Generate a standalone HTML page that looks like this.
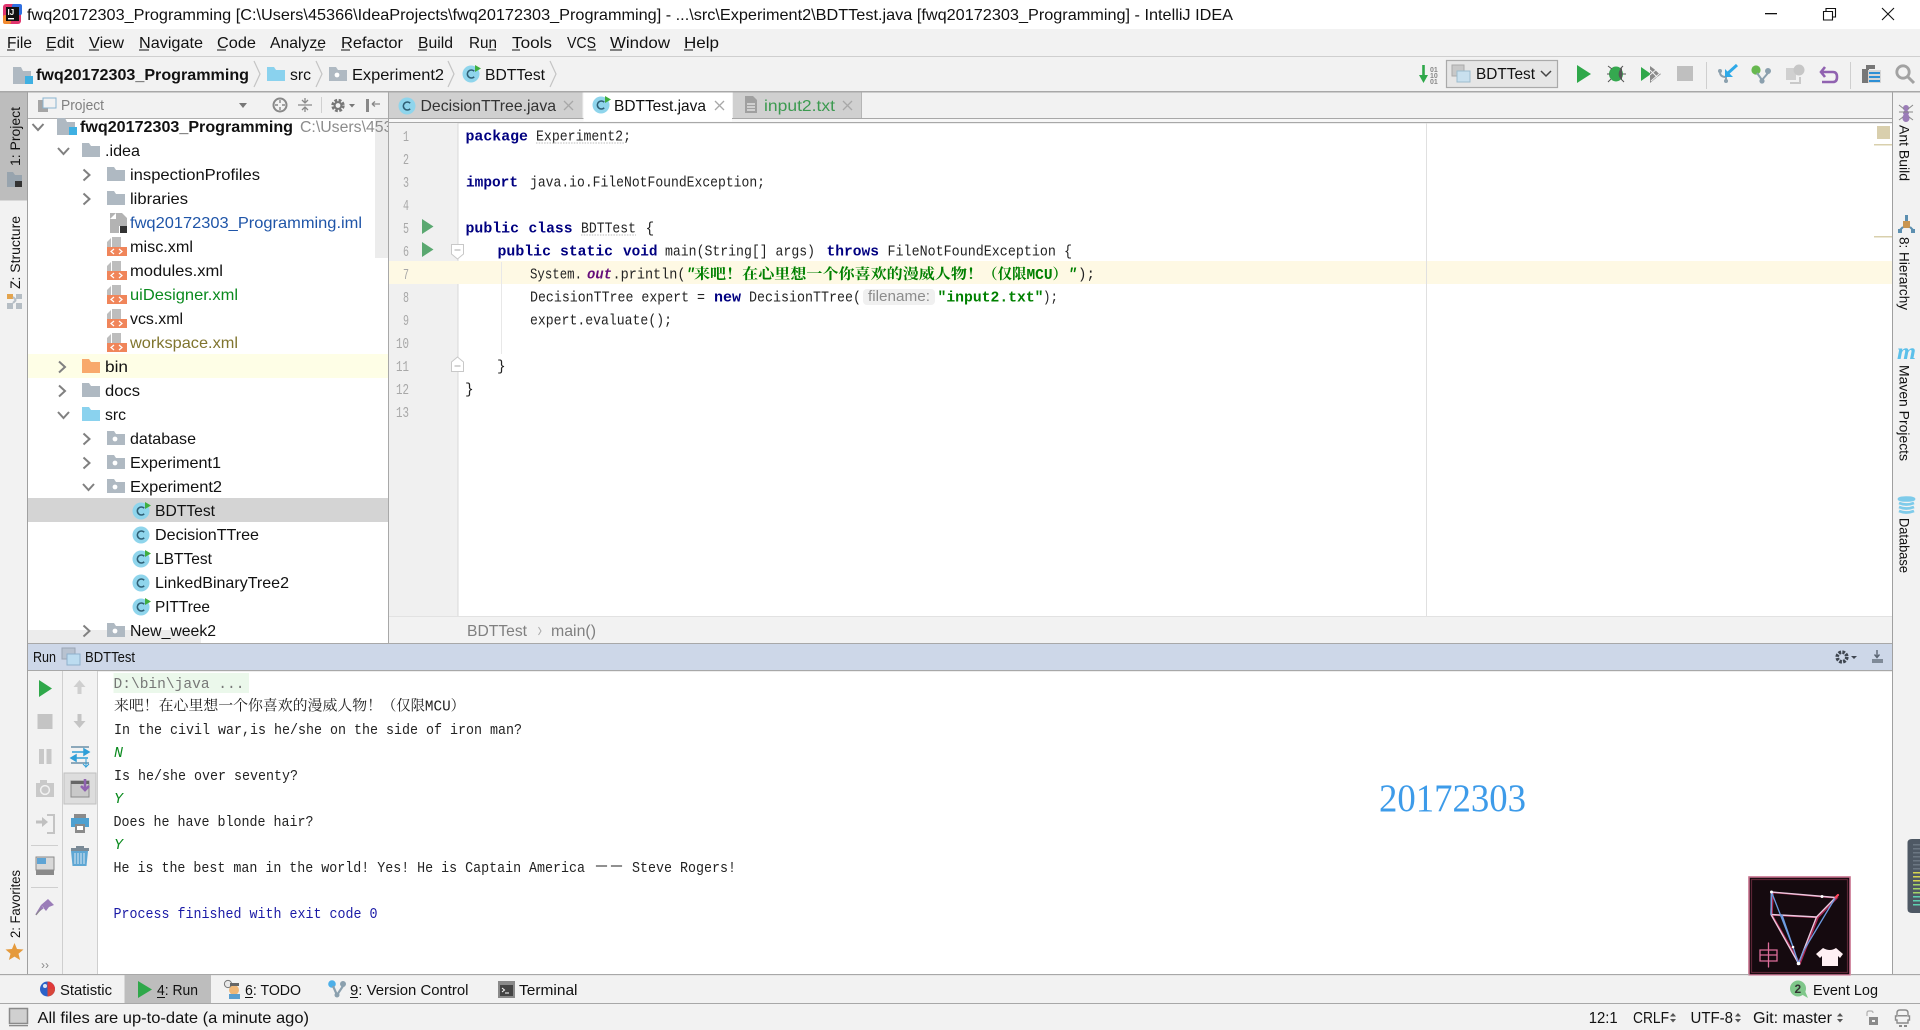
<!DOCTYPE html>
<html><head><meta charset="utf-8"><title>IntelliJ IDEA</title>
<style>
html,body{margin:0;padding:0;background:#fff;width:1920px;height:1030px;overflow:hidden}
svg{display:block}
text{font-family:"Liberation Sans","Noto Sans CJK SC",sans-serif;font-size:16px;fill:#111;white-space:pre}
.m{font-family:"Liberation Mono","Noto Serif CJK SC",monospace;font-size:14.5px;fill:#222}
.b{font-weight:bold;fill:#000080}
.g{font-weight:bold;fill:#008000}
.c{font-family:"Liberation Mono","Noto Serif CJK SC",monospace;font-size:14.5px;fill:#222}
.n{font-family:"Liberation Mono",monospace;font-size:15px;fill:#a8a8a8}
.r{font-size:13.5px;fill:#111}
</style></head><body>
<svg width="1920" height="1030" viewBox="0 0 1920 1030" xmlns="http://www.w3.org/2000/svg">
<defs>
<symbol id="fd" viewBox="0 0 18 14" width="18" height="14"><path d="M0 0H7L9 3H18V14H0Z" fill="#afb9c2"/></symbol>
<symbol id="fs" viewBox="0 0 18 14" width="18" height="14"><path d="M0 0H7L9 3H18V14H0Z" fill="#8ad2ee"/></symbol>
<symbol id="fo" viewBox="0 0 18 14" width="18" height="14"><path d="M0 0H7L9 3H18V14H0Z" fill="#f8a96c"/></symbol>
<symbol id="fp" viewBox="0 0 18 14" width="18" height="14"><path d="M0 0H7L9 3H18V14H0Z" fill="#afb9c2"/><circle cx="8" cy="8" r="2.4" fill="#fff"/></symbol>
<symbol id="mod" viewBox="0 0 20 17" width="20" height="17"><path d="M0 0H8L10 4H18V17H0Z" fill="#afb9c2"/><rect x="12" y="9" width="8" height="8" fill="#3fb0e2"/></symbol>
<symbol id="cl" viewBox="0 0 19 18" width="19" height="18"><circle cx="9" cy="9" r="8.5" fill="#8fd5ec"/><path d="M12.2 6.2A4 4 0 1 0 12.2 11.8" fill="none" stroke="#2f5f75" stroke-width="1.6"/></symbol>
<symbol id="clr" viewBox="0 0 19 18" width="19" height="18"><circle cx="9" cy="9" r="8.5" fill="#8fd5ec"/><path d="M12.2 6.2A4 4 0 1 0 12.2 11.8" fill="none" stroke="#2f5f75" stroke-width="1.6"/><path d="M13 0L19 3.5L13 7Z" fill="#3fae3f"/></symbol>
<symbol id="xml" viewBox="0 0 20 19" width="20" height="19"><path d="M5 0H14V10H5Z" fill="#bdbdbd"/><path d="M4 1V10H0V5Z" fill="#bdbdbd"/><rect y="10" width="20" height="9" fill="#f0855a"/><path d="M7 12L4 14.5L7 17M12 12L15 14.5L12 17" fill="none" stroke="#fff" stroke-width="1.2"/></symbol>
<symbol id="play" viewBox="0 0 14 18" width="14" height="18"><path d="M0 0L14 9L0 18Z" fill="#2fa84a"/></symbol>
</defs>

<rect width="1920" height="1030" fill="#fff"/>

<!-- title -->
<rect width="1920" height="29" fill="#fff"/>
<rect x="3" y="4" width="18" height="20" rx="3" fill="#e0356e"/>
<rect x="12" y="4" width="10" height="11" rx="2" fill="#2f6fe0"/>
<rect x="3" y="15" width="8" height="9" rx="2" fill="#f28b30"/>
<rect x="6" y="7" width="13" height="14" fill="#111"/>
<rect x="8" y="18" width="6" height="1.4" fill="#fff"/>
<text x="7.5" y="15" style="font-size:8px;font-weight:bold;fill:#fff">IJ</text>
<text x="27" y="20" textLength="1206" lengthAdjust="spacingAndGlyphs">fwq20172303_Programming [C:\Users\45366\IdeaProjects\fwq20172303_Programming] - ...\src\Experiment2\BDTTest.java [fwq20172303_Programming] - IntelliJ IDEA</text>
<rect x="1765" y="13" width="12" height="1.3" fill="#111"/>
<path d="M1823.5 11.5h9v8.5h-9zM1826 11.5V8.5h9.5v8.5h-3" fill="none" stroke="#111" stroke-width="1.1"/>
<path d="M1882 8L1894 20M1894 8L1882 20" stroke="#111" stroke-width="1.1"/>

<!-- menu -->
<rect y="29" width="1920" height="27" fill="#f2f2f2"/>
<rect y="56" width="1920" height="1" fill="#cfcfcf"/>
<text x="7" y="48" textLength="25" lengthAdjust="spacingAndGlyphs">File</text>
<text x="46" y="48" textLength="28" lengthAdjust="spacingAndGlyphs">Edit</text>
<text x="89" y="48" textLength="35" lengthAdjust="spacingAndGlyphs">View</text>
<text x="139" y="48" textLength="64" lengthAdjust="spacingAndGlyphs">Navigate</text>
<text x="217" y="48" textLength="39" lengthAdjust="spacingAndGlyphs">Code</text>
<text x="270" y="48" textLength="56" lengthAdjust="spacingAndGlyphs">Analyze</text>
<text x="341" y="48" textLength="62" lengthAdjust="spacingAndGlyphs">Refactor</text>
<text x="418" y="48" textLength="35" lengthAdjust="spacingAndGlyphs">Build</text>
<text x="469" y="48" textLength="28" lengthAdjust="spacingAndGlyphs">Run</text>
<text x="512" y="48" textLength="40" lengthAdjust="spacingAndGlyphs">Tools</text>
<text x="567" y="48" textLength="29" lengthAdjust="spacingAndGlyphs">VCS</text>
<text x="610" y="48" textLength="60" lengthAdjust="spacingAndGlyphs">Window</text>
<text x="684" y="48" textLength="35" lengthAdjust="spacingAndGlyphs">Help</text>
<g fill="#111"><rect x="7" y="49.5" width="8" height="1"/><rect x="46" y="49.5" width="8" height="1"/><rect x="89" y="49.5" width="10" height="1"/><rect x="139" y="49.5" width="10" height="1"/><rect x="217" y="49.5" width="9" height="1"/><rect x="315" y="49.5" width="8" height="1"/><rect x="341" y="49.5" width="9" height="1"/><rect x="418" y="49.5" width="9" height="1"/><rect x="488" y="49.5" width="8" height="1"/><rect x="512" y="49.5" width="8" height="1"/><rect x="588" y="49.5" width="8" height="1"/><rect x="610" y="49.5" width="12" height="1"/><rect x="684" y="49.5" width="9" height="1"/></g>

<!-- nav bar -->
<rect y="57" width="1920" height="34" fill="#f2f2f2"/>
<rect y="91" width="1920" height="1.5" fill="#a8a8a8"/>
<use href="#mod" x="13" y="67"/>
<text x="36" y="80" textLength="213" lengthAdjust="spacingAndGlyphs" style="font-weight:bold">fwq20172303_Programming</text>
<g fill="none" stroke="#c4c4c4" stroke-width="1.2"><path d="M254 61L260 74L254 87"/><path d="M316 61L322 74L316 87"/><path d="M448 61L454 74L448 87"/><path d="M550 61L556 74L550 87"/></g>
<use href="#fs" x="267" y="67"/>
<text x="290" y="80" textLength="21" lengthAdjust="spacingAndGlyphs">src</text>
<use href="#fp" x="329" y="67"/>
<text x="352" y="80" textLength="92" lengthAdjust="spacingAndGlyphs">Experiment2</text>
<use href="#clr" x="462" y="65"/>
<text x="485" y="80" textLength="60" lengthAdjust="spacingAndGlyphs">BDTTest</text>

<!-- toolbar right -->
<path d="M1423.5 65v13" stroke="#2fa84a" stroke-width="2.6"/><path d="M1419 75h9l-4.5 8z" fill="#2fa84a"/>
<text x="1430" y="72" style="font-size:7px;font-weight:bold;fill:#888">01</text><text x="1430" y="78" style="font-size:7px;font-weight:bold;fill:#888">10</text><text x="1430" y="84" style="font-size:7px;font-weight:bold;fill:#888">01</text>
<rect x="1446.5" y="60.5" width="111" height="27" fill="#e6e6e6" stroke="#aaa" stroke-width="1.2"/>
<rect x="1452" y="65" width="12" height="11" fill="#c8c8c8" stroke="#aaa"/><rect x="1457" y="71" width="13" height="11" fill="#c9e0ee" stroke="#9dbccd"/>
<text x="1476" y="79" textLength="59" lengthAdjust="spacingAndGlyphs">BDTTest</text>
<path d="M1541 71L1546 76L1551 71" fill="none" stroke="#444" stroke-width="1.5"/>
<use href="#play" x="1577" y="65"/>
<ellipse cx="1616" cy="74" rx="7" ry="7.5" fill="#35a84f"/><path d="M1622 68a7 7 0 0 0 0 12z" fill="#555"/><path d="M1608 66l4 3M1623 66l-3 3M1607 74h3M1622 74h4M1608 82l3-3M1624 82l-3-3" stroke="#555"/>
<path d="M1641 67L1651 74L1641 81Z" fill="#2fa84a"/><path d="M1650 66L1661 74L1650 83Z" fill="#8a8a8a"/><path d="M1650 70l8 8M1653 67l7 7M1650 75l8-7M1651 81l8-7" stroke="#f2f2f2" stroke-width="1"/>
<rect x="1677" y="66" width="16" height="15" fill="#bfbfbf"/>
<rect x="1706" y="62" width="1" height="27" fill="#cfcfcf"/>
<path d="M1726 71L1726 82M1720 72q0 5 6 5" stroke="#8ba0ae" stroke-width="2" fill="none"/><circle cx="1720" cy="71" r="2" fill="#8ba0ae"/><circle cx="1726" cy="81" r="2" fill="#8ba0ae"/><path d="M1737 65l-10 9" stroke="#2ea9e8" stroke-width="3"/><path d="M1725 69v8h8z" fill="#2ea9e8"/>
<circle cx="1756" cy="70" r="4.6" fill="#67b84f"/><circle cx="1768" cy="71" r="3" fill="#8ba0ae"/><circle cx="1762" cy="81" r="2.6" fill="#8ba0ae"/><path d="M1757 73L1762 80L1768 73" fill="none" stroke="#8ba0ae" stroke-width="2"/>
<rect x="1786" y="68" width="10" height="12" fill="#d0d0d0"/><path d="M1790 83h10v-6" fill="none" stroke="#c9c9c9" stroke-width="2"/><circle cx="1799" cy="70" r="5.5" fill="#c6c6c6"/>
<path d="M1825 67L1821 72L1825 77M1822 72H1833Q1837 72 1837 77T1833 82H1822" fill="none" stroke="#9062b0" stroke-width="2.6"/>
<rect x="1850" y="62" width="1" height="27" fill="#cfcfcf"/>
<rect x="1862" y="69" width="7" height="14" fill="#777"/><rect x="1866" y="65" width="9" height="4" fill="#777"/><rect x="1868" y="70" width="13" height="13" fill="#d5d5d5"/><path d="M1869 72h11v2h-11zM1869 76h11v2h-11zM1869 80h11v2h-11z" fill="#2d8fd5"/>
<circle cx="1903" cy="72" r="6.2" fill="none" stroke="#a2a2a2" stroke-width="2.8"/><path d="M1908 77L1914 83" stroke="#a2a2a2" stroke-width="3"/>

<!-- left strip -->
<rect y="92.5" width="27" height="882" fill="#f2f2f2"/>
<rect x="27" y="92.5" width="1" height="882" fill="#a0a0a0"/>
<rect y="92.5" width="27" height="108" fill="#bdbdbd"/>
<text class="r" transform="translate(20,166) rotate(-90)" textLength="59" lengthAdjust="spacingAndGlyphs">1: Project</text>
<path d="M7 172H13L15 175H22V187H7Z" fill="#98a4ae"/><rect x="15" y="181" width="7" height="6" fill="#333"/>
<text class="r" transform="translate(20,289) rotate(-90)" textLength="73" lengthAdjust="spacingAndGlyphs">Z: Structure</text>
<path d="M7 294h6v5H7zM16 294h6v5h-6zM7 303h6v6H7zM16 303h6v6h-6z" fill="#b5bdc4"/><rect x="7" y="294" width="6" height="5" fill="#e3a44e"/><path d="M13 297l3 3M16 300l-3 3" stroke="#b5bdc4" stroke-width="2"/>
<text class="r" transform="translate(20,938) rotate(-90)" textLength="68" lengthAdjust="spacingAndGlyphs">2: Favorites</text>
<path d="M14.5 943l2.5 6 6.5.5-5 4.2 1.6 6.3-5.6-3.4-5.6 3.4 1.6-6.3-5-4.2 6.5-.5z" fill="#e59a3c"/>

<!-- project panel -->
<rect x="28" y="92.5" width="360" height="25.5" fill="#f2f2f2"/>
<rect x="28" y="118" width="360" height="1" fill="#b0b0b0"/>
<rect x="38" y="100" width="10" height="12" fill="#a5a5a5"/><rect x="43" y="98" width="13" height="10" fill="#f2f2f2" stroke="#8ab4d0"/>
<text x="61" y="110" textLength="43" lengthAdjust="spacingAndGlyphs" style="fill:#808080;font-size:14.5px">Project</text>
<path d="M239 103h8l-4 5z" fill="#777"/>
<circle cx="280" cy="105" r="6.5" fill="none" stroke="#888" stroke-width="2"/><path d="M280 100v3M280 107v3M275 105h3M282 105h3" stroke="#888" stroke-width="1.4"/>
<path d="M298 105h14M305 98v4M302 100l3 3 3-3M305 112v-4M302 110l3-3 3 3" stroke="#888" fill="none" stroke-width="1.3"/>
<rect x="321" y="97" width="1" height="16" fill="#d0d0d0"/>
<circle cx="338" cy="105.5" r="5" fill="none" stroke="#777" stroke-width="3.4" stroke-dasharray="2.6 1.4"/><circle cx="338" cy="105.5" r="3.4" fill="none" stroke="#777" stroke-width="2"/><path d="M349 104h6l-3 3.5z" fill="#777"/>
<rect x="366" y="99" width="3" height="13" fill="#888"/><path d="M372 104h8M372 104l3-2.5M372 104l3 2.5" stroke="#888" stroke-width="1.3" fill="none"/>

<rect x="28" y="119" width="360" height="524" fill="#fff"/>
<rect x="375" y="119" width="13" height="139" fill="#ececec"/>
<rect x="28" y="354" width="360" height="24" fill="#fefee6"/>
<rect x="28" y="498" width="360" height="24" fill="#d4d4d4"/>
<rect x="28" y="630" width="173" height="13" fill="#ececec"/>

<g fill="none" stroke="#808080" stroke-width="2">
<path d="M32.5 124L38 130L43.5 124"/>
<path d="M58 148L63.5 154L69 148"/>
<path d="M83.5 169.5L89.5 175L83.5 180.5"/>
<path d="M83.5 193.5L89.5 199L83.5 204.5"/>
<path d="M59 361.5L65 367L59 372.5"/>
<path d="M59 385.5L65 391L59 396.5"/>
<path d="M58 412L63.5 418L69 412"/>
<path d="M83.5 433.5L89.5 439L83.5 444.5"/>
<path d="M83.5 457.5L89.5 463L83.5 468.5"/>
<path d="M83 484L88.5 490L94 484"/>
<path d="M83.5 625.5L89.5 631L83.5 636.5"/>
</g>

<use href="#mod" x="57" y="118"/>
<text x="80" y="132" textLength="213" lengthAdjust="spacingAndGlyphs" style="font-weight:bold">fwq20172303_Programming</text>
<svg x="300" y="110" width="88" height="30"><text x="0" y="22" textLength="110" lengthAdjust="spacingAndGlyphs" style="fill:#8c8c8c;font-size:15.5px">C:\Users\45366</text></svg>

<use href="#fd" x="82" y="143"/><text x="105" y="156" textLength="35" lengthAdjust="spacingAndGlyphs">.idea</text>
<use href="#fd" x="107" y="167"/><text x="130" y="180" textLength="130" lengthAdjust="spacingAndGlyphs">inspectionProfiles</text>
<use href="#fd" x="107" y="191"/><text x="130" y="204" textLength="58" lengthAdjust="spacingAndGlyphs">libraries</text>

<path d="M110 213H122L127 218V226H119V233H110Z" fill="#b3b3b3"/><path d="M110 219L116 213V219Z" fill="#fff"/><rect x="120" y="226" width="7" height="7" fill="#333"/>
<text x="130" y="228" textLength="232" lengthAdjust="spacingAndGlyphs" style="fill:#1f55a8">fwq20172303_Programming.iml</text>

<use href="#xml" x="107" y="237"/><text x="130" y="252" textLength="63" lengthAdjust="spacingAndGlyphs">misc.xml</text>
<use href="#xml" x="107" y="261"/><text x="130" y="276" textLength="93" lengthAdjust="spacingAndGlyphs">modules.xml</text>
<use href="#xml" x="107" y="285"/><text x="130" y="300" textLength="108" lengthAdjust="spacingAndGlyphs" style="fill:#0a8a1e">uiDesigner.xml</text>
<use href="#xml" x="107" y="309"/><text x="130" y="324" textLength="53" lengthAdjust="spacingAndGlyphs">vcs.xml</text>
<use href="#xml" x="107" y="333"/><text x="130" y="348" textLength="108" lengthAdjust="spacingAndGlyphs" style="fill:#80752e">workspace.xml</text>

<use href="#fo" x="82" y="359"/><text x="105" y="372" textLength="23" lengthAdjust="spacingAndGlyphs">bin</text>
<use href="#fd" x="82" y="383"/><text x="105" y="396" textLength="35" lengthAdjust="spacingAndGlyphs">docs</text>
<use href="#fs" x="82" y="407"/><text x="105" y="420" textLength="21" lengthAdjust="spacingAndGlyphs">src</text>
<use href="#fp" x="107" y="431"/><text x="130" y="444" textLength="66" lengthAdjust="spacingAndGlyphs">database</text>
<use href="#fp" x="107" y="455"/><text x="130" y="468" textLength="91" lengthAdjust="spacingAndGlyphs">Experiment1</text>
<use href="#fp" x="107" y="479"/><text x="130" y="492" textLength="92" lengthAdjust="spacingAndGlyphs">Experiment2</text>
<use href="#clr" x="132" y="502"/><text x="155" y="516" textLength="60" lengthAdjust="spacingAndGlyphs">BDTTest</text>
<use href="#cl" x="132" y="526"/><text x="155" y="540" textLength="104" lengthAdjust="spacingAndGlyphs">DecisionTTree</text>
<use href="#clr" x="132" y="550"/><text x="155" y="564" textLength="57" lengthAdjust="spacingAndGlyphs">LBTTest</text>
<use href="#cl" x="132" y="574"/><text x="155" y="588" textLength="134" lengthAdjust="spacingAndGlyphs">LinkedBinaryTree2</text>
<use href="#clr" x="132" y="598"/><text x="155" y="612" textLength="55" lengthAdjust="spacingAndGlyphs">PITTree</text>
<use href="#fp" x="107" y="623"/><text x="130" y="636" textLength="86" lengthAdjust="spacingAndGlyphs">New_week2</text>

<rect x="388" y="92.5" width="1" height="551" fill="#a8a8a8"/>

<!-- tabs -->
<rect x="389" y="92.5" width="1503" height="25.5" fill="#f2f2f2"/>
<rect x="389" y="118" width="1503" height="1.2" fill="#a8a8a8"/>
<rect x="389" y="119" width="1503" height="3" fill="#f7f7f7"/>
<rect x="389" y="122" width="1503" height="1.2" fill="#a8a8a8"/>
<rect x="389" y="92.5" width="193.5" height="25.5" fill="#d0d0d0"/>
<rect x="583.5" y="92.5" width="148.5" height="29" fill="#fff"/>
<rect x="733" y="92.5" width="128" height="25.5" fill="#d0d0d0"/>
<rect x="861" y="92.5" width="1" height="25.5" fill="#b5b5b5"/>
<use href="#cl" x="398" y="97"/>
<text x="420.500" y="111" textLength="135.500" lengthAdjust="spacingAndGlyphs" style="fill:#333">DecisionTTree.java</text>
<path d="M564 101L573 110M573 101L564 110" stroke="#a8a8a8" stroke-width="1.3"/>
<use href="#clr" x="592" y="96"/>
<text x="614" y="111" textLength="92" lengthAdjust="spacingAndGlyphs">BDTTest.java</text>
<path d="M715 101L724 110M724 101L715 110" stroke="#a8a8a8" stroke-width="1.3"/>
<path d="M745 96H753L757 100V113H745Z" fill="#a0a0a0"/><path d="M747 104h8M747 107h8M747 110h8" stroke="#fff"/>
<text x="764" y="111" textLength="71" lengthAdjust="spacingAndGlyphs" style="fill:#3c9a50">input2.txt</text>
<path d="M843 101L852 110M852 101L843 110" stroke="#a8a8a8" stroke-width="1.3"/>

<!-- editor -->
<rect x="389" y="123" width="68.500" height="493" fill="#f0f0f0"/>
<rect x="457.500" y="123" width="1" height="493" fill="#d8d8d8"/>
<rect x="389" y="261" width="1503" height="23" fill="#fef9e4"/>
<rect x="1426" y="123" width="1" height="493" fill="#e0e0e0"/>
<rect x="501" y="262" width="1" height="92" fill="#e8e8e8"/>

<text class="n" x="403" y="141" textLength="6" lengthAdjust="spacingAndGlyphs">1</text><text class="n" x="403" y="164" textLength="6" lengthAdjust="spacingAndGlyphs">2</text><text class="n" x="403" y="187" textLength="6" lengthAdjust="spacingAndGlyphs">3</text><text class="n" x="403" y="210" textLength="6" lengthAdjust="spacingAndGlyphs">4</text><text class="n" x="403" y="233" textLength="6" lengthAdjust="spacingAndGlyphs">5</text><text class="n" x="403" y="256" textLength="6" lengthAdjust="spacingAndGlyphs">6</text><text class="n" x="403" y="279" textLength="6" lengthAdjust="spacingAndGlyphs">7</text><text class="n" x="403" y="302" textLength="6" lengthAdjust="spacingAndGlyphs">8</text><text class="n" x="403" y="325" textLength="6" lengthAdjust="spacingAndGlyphs">9</text><text class="n" x="396" y="348" textLength="13" lengthAdjust="spacingAndGlyphs">10</text><text class="n" x="396" y="371" textLength="13" lengthAdjust="spacingAndGlyphs">11</text><text class="n" x="396" y="394" textLength="13" lengthAdjust="spacingAndGlyphs">12</text><text class="n" x="396" y="417" textLength="13" lengthAdjust="spacingAndGlyphs">13</text>
<path d="M422 219L433.5 226.5L422 234ZM422 242L433.5 249.5L422 257Z" fill="#5aa870"/>
<path d="M451.5 244.5H463.5V254L457.5 259L451.5 254Z" fill="#fff" stroke="#c8c8c8"/><path d="M454.5 250H460.5" stroke="#aaa"/>
<path d="M451.5 371.5H463.5V362L457.5 357L451.5 362Z" fill="#fff" stroke="#c8c8c8"/><path d="M454.5 366H460.5" stroke="#aaa"/>

<text class="m b" x="465.5" y="140.5" textLength="62.5" lengthAdjust="spacingAndGlyphs">package</text>
<text class="m" x="536" y="140.5" textLength="95" lengthAdjust="spacingAndGlyphs">Experiment2;</text>
<path d="M536 143H625" stroke="#bbb" stroke-dasharray="1.5 1.2"/>
<text class="m b" x="466" y="186.5" textLength="52" lengthAdjust="spacingAndGlyphs">import</text>
<text class="m" x="530" y="186.5" textLength="235" lengthAdjust="spacingAndGlyphs">java.io.FileNotFoundException;</text>
<text class="m b" x="465.5" y="232.5" textLength="53.5" lengthAdjust="spacingAndGlyphs">public</text>
<text class="m b" x="528.5" y="232.5" textLength="44" lengthAdjust="spacingAndGlyphs">class</text>
<text class="m" x="581" y="232.5" textLength="55" lengthAdjust="spacingAndGlyphs">BDTTest</text>
<path d="M581 235H636" stroke="#bbb" stroke-dasharray="1.5 1.2"/>
<text class="m" x="645.5" y="232.5">{</text>
<text class="m b" x="497.5" y="255.5" textLength="53.5" lengthAdjust="spacingAndGlyphs">public</text>
<text class="m b" x="560" y="255.5" textLength="53" lengthAdjust="spacingAndGlyphs">static</text>
<text class="m b" x="623" y="255.5" textLength="34.5" lengthAdjust="spacingAndGlyphs">void</text>
<text class="m" x="665" y="255.5" textLength="150" lengthAdjust="spacingAndGlyphs">main(String[] args)</text>
<text class="m b" x="826.5" y="255.5" textLength="52.5" lengthAdjust="spacingAndGlyphs">throws</text>
<text class="m" x="887.5" y="255.5" textLength="184.5" lengthAdjust="spacingAndGlyphs">FileNotFoundException {</text>
<text class="m" x="530" y="278.5" textLength="52" lengthAdjust="spacingAndGlyphs">System.</text>
<text class="m" x="587" y="278.5" textLength="25" lengthAdjust="spacingAndGlyphs" style="font-style:italic;font-weight:bold;fill:#660e7a">out</text>
<text class="m" x="612.5" y="278.5" textLength="73" lengthAdjust="spacingAndGlyphs">.println(</text>
<text class="m g" x="686" y="278.5" style="font-style:italic">"</text>
<text class="m g" x="694" y="279" textLength="289" lengthAdjust="spacingAndGlyphs">来吧&#xFF01;在心里想一个你喜欢的漫威人物&#xFF01;</text>
<text class="m g" x="983" y="279" textLength="84" lengthAdjust="spacingAndGlyphs">&#xFF08;仅限MCU&#xFF09;</text>
<text class="m g" x="1068" y="278.5" style="font-style:italic">"</text>
<text class="m" x="1078" y="278.5" textLength="17" lengthAdjust="spacingAndGlyphs">);</text>
<text class="m" x="530" y="301.5" textLength="175" lengthAdjust="spacingAndGlyphs">DecisionTTree expert =</text>
<text class="m b" x="714" y="301.5" textLength="27" lengthAdjust="spacingAndGlyphs">new</text>
<text class="m" x="749" y="301.5" textLength="112" lengthAdjust="spacingAndGlyphs">DecisionTTree(</text>
<rect x="863" y="289" width="72" height="16" rx="4" fill="#f0f0f0"/>
<text x="868" y="301" textLength="62" lengthAdjust="spacingAndGlyphs" style="font-size:15px;fill:#8c8c8c">filename:</text>
<text class="m g" x="937.5" y="301.5" textLength="106" lengthAdjust="spacingAndGlyphs">"input2.txt"</text>
<text class="m" x="1043" y="301.5" textLength="15" lengthAdjust="spacingAndGlyphs">);</text>
<text class="m" x="530" y="324.5" textLength="142" lengthAdjust="spacingAndGlyphs">expert.evaluate();</text>
<text class="m" x="497" y="370.5">}</text>
<text class="m" x="465" y="393.5">}</text>

<rect x="1877" y="126" width="13" height="13" fill="#d9cfad"/>
<rect x="1874" y="144" width="18" height="1.5" fill="#d9d0ad"/>
<rect x="1874" y="236" width="18" height="1.5" fill="#d9d0ad"/>

<!-- breadcrumb -->
<rect x="389" y="616" width="1503" height="27" fill="#f2f2f2"/>
<rect x="389" y="616" width="1503" height="1" fill="#e2e2e2"/>
<text x="467" y="636" textLength="60" lengthAdjust="spacingAndGlyphs" style="fill:#808080">BDTTest</text>
<path d="M538.5 627L541 631L538.5 635" fill="none" stroke="#aaa"/>
<text x="551" y="636" textLength="45" lengthAdjust="spacingAndGlyphs" style="fill:#808080">main()</text>

<!-- right strip -->
<rect x="1892" y="92.5" width="1" height="882" fill="#a0a0a0"/>
<rect x="1893" y="92.5" width="27" height="882" fill="#f2f2f2"/>
<g fill="#9b7cb8"><circle cx="1906" cy="108" r="3"/><ellipse cx="1906" cy="113" rx="3" ry="2.6"/><ellipse cx="1906" cy="118" rx="3.6" ry="4"/></g>
<path d="M1899 105l5 4M1913 105l-5 4M1899 112h14M1899 120l4-3M1913 120l-4-3" stroke="#888" fill="none"/>
<text class="r" transform="translate(1899.5,125) rotate(90)" textLength="56" lengthAdjust="spacingAndGlyphs">Ant Build</text>
<rect x="1905" y="215" width="3" height="6" fill="#5c8fb0"/><rect x="1903" y="221" width="7" height="7" fill="#c99651"/><path d="M1903 227L1899 231M1910 227L1914 231" stroke="#5c8fb0" stroke-width="2"/><rect x="1898" y="229" width="4" height="4" fill="#5c8fb0"/><rect x="1911" y="229" width="4" height="4" fill="#5c8fb0"/>
<text class="r" transform="translate(1899.5,237) rotate(90)" textLength="73" lengthAdjust="spacingAndGlyphs">8: Hierarchy</text>
<text x="1897" y="359" textLength="19" lengthAdjust="spacingAndGlyphs" style="font-family:'Liberation Serif',serif;font-size:23px;font-style:italic;font-weight:bold;fill:#5cc0ea">m</text>
<text class="r" transform="translate(1899.5,365) rotate(90)" textLength="96" lengthAdjust="spacingAndGlyphs">Maven Projects</text>
<g fill="none" stroke="#7ecbea" stroke-width="2.8"><ellipse cx="1906.5" cy="499" rx="7.5" ry="1.4" fill="#7ecbea"/><path d="M1899 503q7.5 3 15 0M1899 507q7.5 3 15 0M1899 511q7.5 3 15 0"/></g>
<text class="r" transform="translate(1899.5,518) rotate(90)" textLength="55" lengthAdjust="spacingAndGlyphs">Database</text>

<!-- run panel -->
<rect x="28" y="643" width="1864" height="1.2" fill="#a8a8a8"/>
<rect x="28" y="644" width="1864" height="26" fill="#cdd7e8"/>
<rect x="28" y="670" width="1864" height="1.2" fill="#a8a8a8"/>
<text x="33" y="662" textLength="23" lengthAdjust="spacingAndGlyphs" style="font-size:14.5px">Run</text>
<rect x="62" y="648" width="13" height="11" fill="#b8c2d0" stroke="#9aa5b5"/><rect x="67" y="654" width="13" height="11" fill="#bcdcf0" stroke="#8fb0cc"/>
<text x="85" y="662" textLength="50" lengthAdjust="spacingAndGlyphs" style="font-size:14.5px">BDTTest</text>
<circle cx="1842" cy="657" r="4.8" fill="none" stroke="#3f4650" stroke-width="3.6" stroke-dasharray="2.6 1.2"/><path d="M1851 656h6l-3 3z" fill="#3f4650"/>
<path d="M1877 650v7M1874.5 654.5l2.500 3 2.500-3" stroke="#5a6472" fill="none" stroke-width="1.4"/><rect x="1872" y="659" width="11" height="4" fill="#7f8a98"/>

<rect x="28" y="671" width="70" height="303" fill="#f2f2f2"/>
<rect x="62" y="671" width="1" height="303" fill="#cfcfcf"/>
<rect x="97" y="671" width="1" height="303" fill="#cfcfcf"/>
<rect x="31" y="845" width="27" height="1" fill="#cfcfcf"/><rect x="31" y="887" width="27" height="1" fill="#cfcfcf"/>
<path d="M39 680L52 688.5L39 697Z" fill="#2fa84a"/>
<rect x="37.5" y="714" width="15" height="15" fill="#c4c4c4"/>
<rect x="39" y="749" width="5" height="15" fill="#c8c8c8"/><rect x="46.5" y="749" width="5" height="15" fill="#c8c8c8"/>
<rect x="36" y="783" width="18" height="14" fill="#c9c9c9"/><rect x="40" y="780" width="7" height="4" fill="#c9c9c9"/><circle cx="45" cy="790" r="4.4" fill="none" stroke="#f2f2f2" stroke-width="1.5"/>
<path d="M36 822h8" stroke="#c0c0c0" stroke-width="3"/><path d="M42 817l6 5-6 5z" fill="#c0c0c0"/><path d="M47 815h7v18h-7" fill="none" stroke="#c4c4c4" stroke-width="2"/>
<rect x="36" y="857" width="18" height="13" fill="#d8d8d8" stroke="#8a8a8a"/><rect x="37" y="858" width="9" height="6" fill="#5fa4d4"/><rect x="36" y="870" width="18" height="5" fill="#8a8a8a"/>
<path d="M48 899l6 6-5 2-3 4-5-6zM41 905l-6 10 9-7" fill="#9a7cb8"/><path d="M41 909l-5 6" stroke="#888"/>
<text x="41" y="969" style="font-size:12px;fill:#888">››</text>

<path d="M79.5 680l6 7h-4v7h-4v-7h-4z" fill="#cfcfcf"/>
<path d="M79.5 728l6-7h-4v-7h-4v7h-4z" fill="#c4c4c4"/>
<path d="M71 747h18M71 763h18" stroke="#6a8fa8" stroke-width="1.6" fill="none"/><path d="M72 752h12M76 758h12M84 749l5 3-5 3zM76 755l-5 3 5 3z" stroke="#2f9fd8" stroke-width="1.5" fill="#2f9fd8"/><path d="M86 759v8l3-3M86 767l-3-3" stroke="#2f9fd8" fill="none"/>
<rect x="64" y="773" width="32" height="31" fill="#ddd" stroke="#c0c0c0"/>
<rect x="71" y="781" width="18" height="16" fill="#c9c9c9" stroke="#8a8a8a"/><rect x="71" y="781" width="18" height="3" fill="#666"/><path d="M85 779v9M81 786l4 4 4-4" stroke="#9062b0" stroke-width="2.6" fill="none"/>
<rect x="71" y="818" width="18" height="9" fill="#4ea0d0"/><rect x="74" y="814" width="12" height="4" fill="#8a8a8a"/><rect x="75" y="824" width="10" height="9" fill="#8a8a8a"/><rect x="77" y="826" width="6" height="4" fill="#fff"/>
<path d="M71 851h17l-1.500 15h-14z" fill="#5ea7d4"/><rect x="71" y="848" width="18" height="3" fill="#7a8a96"/><rect x="76" y="846" width="8" height="2" fill="#7a8a96"/><path d="M75 853v11M78 853v11M81 853v11M84 853v11" stroke="#dceaf4"/>

<!-- console -->
<rect x="113.500" y="673" width="135.500" height="20" fill="#ebf8eb"/>
<text class="c" x="113.500" y="688" textLength="131" lengthAdjust="spacingAndGlyphs" style="fill:#777">D:\bin\java ...</text>
<text class="c" x="114" y="710.5" textLength="268" lengthAdjust="spacingAndGlyphs">来吧&#xFF01;在心里想一个你喜欢的漫威人物&#xFF01;</text>
<text class="c" x="382" y="710.5" textLength="83" lengthAdjust="spacingAndGlyphs">&#xFF08;仅限MCU&#xFF09;</text>
<text class="c" x="114" y="734" textLength="408" lengthAdjust="spacingAndGlyphs">In the civil war,is he/she on the side of iron man?</text>
<text class="c" x="114" y="757" textLength="9" lengthAdjust="spacingAndGlyphs" style="font-style:italic;fill:#0a8a1e">N</text>
<text class="c" x="114" y="780" textLength="184" lengthAdjust="spacingAndGlyphs">Is he/she over seventy?</text>
<text class="c" x="114" y="803" textLength="9" lengthAdjust="spacingAndGlyphs" style="font-style:italic;fill:#0a8a1e">Y</text>
<text class="c" x="113.500" y="826" textLength="200" lengthAdjust="spacingAndGlyphs">Does he have blonde hair?</text>
<text class="c" x="114" y="849" textLength="9" lengthAdjust="spacingAndGlyphs" style="font-style:italic;fill:#0a8a1e">Y</text>
<text class="c" x="113.500" y="872" textLength="471.500" lengthAdjust="spacingAndGlyphs">He is the best man in the world! Yes! He is Captain America</text>
<text class="c" x="596" y="870" textLength="11" lengthAdjust="spacingAndGlyphs">—</text>
<text class="c" x="611" y="870" textLength="11" lengthAdjust="spacingAndGlyphs">—</text>
<text class="c" x="632" y="872" textLength="104" lengthAdjust="spacingAndGlyphs">Steve Rogers!</text>
<text class="c" x="113.500" y="918" textLength="264" lengthAdjust="spacingAndGlyphs" style="fill:#1a1aa6">Process finished with exit code 0</text>

<text x="1379" y="811" textLength="147" lengthAdjust="spacingAndGlyphs" style="font-family:'Liberation Serif',serif;font-size:39px;fill:#3d9be9">20172303</text>

<!-- thumbnail -->
<rect x="1749" y="877" width="101" height="98" fill="#150a0f" stroke="#c66f8c" stroke-width="1.600"/>
<rect x="1751.500" y="879.500" width="96" height="93" fill="none" stroke="#5a2535" stroke-width="1.200"/>
<g fill="none" stroke-linecap="round">
<path d="M1773 892.500L1837 898L1818 917.500L1772 915ZM1772 915L1800 963.500L1818 917.500" stroke="#e0356e" stroke-width="1.500" opacity=".75"/>
<path d="M1771.500 892L1835.500 897.500L1816.500 917L1771 914.500ZM1771 914.500L1798.500 963.500L1816.500 917" stroke="#ecc9df" stroke-width="1.400"/>
<path d="M1771.500 892L1793 947L1798.500 963.500M1835.500 897.500L1804 950L1798.500 963.500M1782 915L1793 947M1771.500 892L1771 914.500" stroke="#6d9be0" stroke-width="1.300"/>
<path d="M1835.500 897.500L1838 895" stroke="#ff4a60" stroke-width="2.200"/>
<path d="M1760 950h17v11h-17zM1768.500 943v24M1760 955h17" stroke="#dd6e9a" stroke-width="1.300"/>
</g>
<g fill="#fff"><circle cx="1771.500" cy="892" r="1.500"/><circle cx="1822" cy="896.500" r="1.500"/><circle cx="1798.500" cy="963.500" r="1.800"/><circle cx="1793" cy="947" r="1.300"/></g>
<path d="M1823 948L1816 954L1820 958L1822 956V966H1838V956L1840 958L1843 954L1836 948Q1830 952 1823 948Z" fill="#fff0f3"/>

<!-- meter widget -->
<path d="M1920 839H1912Q1907.500 839 1907.500 843V909Q1907.500 913 1912 913H1920Z" fill="#4e5864"/>
<g fill="#6b7682"><rect x="1913" y="844" width="7" height="1.500"/><rect x="1913" y="848" width="7" height="1.500"/><rect x="1913" y="852" width="7" height="1.500"/><rect x="1913" y="856" width="7" height="1.500"/><rect x="1913" y="860" width="7" height="1.500"/><rect x="1913" y="864" width="7" height="1.500"/><rect x="1913" y="868" width="7" height="1.500"/></g>
<g fill="#d6d64f"><rect x="1913" y="872" width="7" height="1.500"/><rect x="1913" y="876" width="7" height="1.500"/><rect x="1913" y="880" width="7" height="1.500"/></g>
<g fill="#a4d468"><rect x="1913" y="884" width="7" height="1.500"/><rect x="1913" y="888" width="7" height="1.500"/><rect x="1913" y="892" width="7" height="1.500"/></g>
<g fill="#5fd0b0"><rect x="1913" y="896" width="7" height="1.500"/><rect x="1913" y="900" width="7" height="1.500"/><rect x="1913" y="904" width="7" height="1.500"/></g>

<!-- bottom tool bar -->
<rect y="974" width="1749" height="1.200" fill="#a8a8a8"/>
<rect x="1851" y="974" width="69" height="1.200" fill="#a8a8a8"/>
<rect y="975.500" width="1920" height="27.500" fill="#f2f2f2"/>
<rect y="1003" width="1920" height="1.200" fill="#a8a8a8"/>
<rect y="1004" width="1920" height="26" fill="#f2f2f2"/>
<rect x="124.500" y="975" width="86.500" height="28" fill="#bdbdbd"/>
<circle cx="47.500" cy="989" r="7.500" fill="#2b62c8"/><path d="M47.500 981.500A7.500 7.500 0 0 1 55 989L47.500 989Z" fill="#e03a3a"/><path d="M47.500 989L55 989A7.500 7.500 0 0 1 47.500 996.500Z" fill="#d8463a"/><circle cx="45" cy="986" r="2" fill="#dfe8f4"/>
<text x="60" y="995" textLength="52" lengthAdjust="spacingAndGlyphs" style="font-size:15px">Statistic</text>
<path d="M138 981L152 989.500L138 998Z" fill="#2fa84a"/>
<text x="157" y="995" textLength="41" lengthAdjust="spacingAndGlyphs" style="font-size:15px">4: Run</text>
<circle cx="234" cy="990" r="5" fill="#f0b878"/><rect x="229" y="994" width="11" height="5" fill="#5b9fd0"/><circle cx="228" cy="984" r="3.600" fill="#e8e8e8" stroke="#777"/><rect x="230" y="983" width="9" height="3" fill="#666"/>
<text x="245" y="995" textLength="56" lengthAdjust="spacingAndGlyphs" style="font-size:15px">6: TODO</text>
<circle cx="332" cy="984" r="3.800" fill="#4dafe8"/><circle cx="343" cy="984" r="3" fill="#8ba0ae"/><path d="M333 986L337 995M343 986L337 995" stroke="#8ba0ae" stroke-width="2.200"/><circle cx="337" cy="995" r="2.500" fill="#8ba0ae"/>
<text x="350" y="995" textLength="118.500" lengthAdjust="spacingAndGlyphs" style="font-size:15px">9: Version Control</text>
<rect x="498" y="981" width="17" height="17" fill="#8a8a8a"/><rect x="500" y="985" width="13" height="11" fill="#444"/><path d="M502 988l2.500 2-2.500 2M505 993h4" stroke="#fff" fill="none"/>
<text x="519" y="995" textLength="58.500" lengthAdjust="spacingAndGlyphs" style="font-size:15px">Terminal</text>
<g fill="#111"><rect x="157" y="997" width="8" height="1"/><rect x="245" y="997" width="8" height="1"/><rect x="350" y="997" width="8" height="1"/></g>
<circle cx="1798" cy="988.500" r="8" fill="#7fc78a"/><path d="M1801 994l7 4-3-7z" fill="#7fc78a"/>
<text x="1794.500" y="993" style="font-size:12px;font-weight:bold;fill:#333">2</text>
<text x="1813" y="995" textLength="65" lengthAdjust="spacingAndGlyphs" style="font-size:15px">Event Log</text>

<!-- status -->
<rect x="9.500" y="1008.500" width="18" height="15" fill="#d0d0d0" stroke="#8a8a8a" stroke-width="1.500"/><rect x="9" y="1025" width="19" height="1.300" fill="#8a8a8a"/>
<text x="37.500" y="1023" textLength="271.500" lengthAdjust="spacingAndGlyphs">All files are up-to-date (a minute ago)</text>
<text x="1588.700" y="1023" textLength="29" lengthAdjust="spacingAndGlyphs">12:1</text>
<text x="1633" y="1023" textLength="36" lengthAdjust="spacingAndGlyphs">CRLF</text>
<text x="1690.500" y="1023" textLength="42.500" lengthAdjust="spacingAndGlyphs">UTF-8</text>
<text x="1753" y="1023" textLength="79" lengthAdjust="spacingAndGlyphs">Git: master</text>
<path d="M1670 1016.500l3-3.500 3 3.500zM1670 1019l3 3.500 3-3.500zM1735 1016.500l3-3.500 3 3.500zM1735 1019l3 3.500 3-3.500zM1837 1016.500l3-3.500 3 3.500zM1837 1019l3 3.500 3-3.500z" fill="#555"/>
<path d="M1867 1016v-3q0-2 2-2h2q2 0 2 2" fill="none" stroke="#b0b0b0" stroke-width="1.200"/><rect x="1869" y="1017" width="9" height="8" fill="#8a8a8a"/><rect x="1872" y="1020" width="3" height="2" fill="#f2f2f2"/>
<path d="M1897 1016v-3q0-3 3-3h5q3 0 3 3v3h1.500v4h-1.500v3h-11v-3h-1.500v-4z" fill="none" stroke="#8a8a8a" stroke-width="1.400"/><path d="M1899 1025h3v2h-3zM1904 1025h3v2h-3z" fill="#8a8a8a"/><rect x="1898" y="1015" width="9" height="1.500" fill="#8a8a8a"/>
</svg>
</body></html>
